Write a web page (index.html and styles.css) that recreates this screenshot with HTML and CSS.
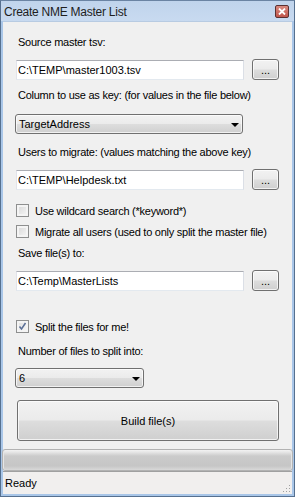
FILE: index.html
```html
<!DOCTYPE html>
<html lang="en">
<head>
  <meta charset="UTF-8" />
  <title>Create NME Master List</title>
  <link rel="stylesheet" href="styles.css">
</head>
<body>
  <div class="window">
    <div class="titlebar">
      <span class="title">Create NME Master List</span>
      <span class="close-btn" aria-label="Close">
        <svg width="8" height="7" viewBox="0 0 8 7"><path d="M1 0.5 L7 6.5 M7 0.5 L1 6.5" stroke="#fff" stroke-width="1.8"/></svg>
      </span>
    </div>

    <div class="client">
      <div class="form">
        <div class="lbl first">Source master tsv:</div>
        <div class="field-row">
          <input class="textbox" type="text" value="C:\TEMP\master1003.tsv">
          <button class="btn browse">...</button>
        </div>

        <div class="lbl gap9">Column to use as key: (for values in the file below)</div>
        <div class="combo wide">
          <span>TargetAddress</span>
          <span class="arrow"></span>
        </div>

        <div class="lbl gap12">Users to migrate: (values matching the above key)</div>
        <div class="field-row">
          <input class="textbox" type="text" value="C:\TEMP\Helpdesk.txt">
          <button class="btn browse">...</button>
        </div>

        <label class="check first-check">
          <span class="box"></span>
          <span>Use wildcard search (*keyword*)</span>
        </label>
        <label class="check">
          <span class="box"></span>
          <span>Migrate all users (used to only split the master file)</span>
        </label>

        <div class="lbl gap9">Save file(s) to:</div>
        <div class="field-row">
          <input class="textbox" type="text" value="C:\Temp\MasterLists">
          <button class="btn browse">...</button>
        </div>

        <label class="check split-check">
          <span class="box checked">
            <svg width="9" height="9" viewBox="0 0 9 9"><path d="M1.5 4.5 L3.5 7 L7.5 1" fill="none" stroke="#5a6f96" stroke-width="1.5"/></svg>
          </span>
          <span>Split the files for me!</span>
        </label>

        <div class="lbl gap12">Number of files to split into:</div>
        <div class="combo narrow">
          <span>6</span>
          <span class="arrow"></span>
        </div>

        <button class="btn build">Build file(s)</button>
      </div>

      <div class="progress"></div>

      <div class="statusbar">
        <span>Ready</span>
        <svg class="grip" width="10" height="10" viewBox="0 0 10 10">
          <rect x="8" y="2" width="1" height="1" fill="#a0a0a0"/>
          <rect x="5" y="5" width="1" height="1" fill="#a0a0a0"/>
          <rect x="8" y="5" width="1" height="1" fill="#a0a0a0"/>
          <rect x="2" y="8" width="1" height="1" fill="#a0a0a0"/>
          <rect x="5" y="8" width="1" height="1" fill="#a0a0a0"/>
          <rect x="8" y="8" width="1" height="1" fill="#a0a0a0"/>
        </svg>
      </div>
    </div>
  </div>
</body>
</html>
```

FILE: styles.css
```css
html, body {
  margin: 0; padding: 0;
}
body {
  font-family: "Liberation Sans", Arial, sans-serif;
  font-size: 11px;
  color: #000;
  background: #a9c6e8;
}
.window {
  width: 295px;
  height: 497px;
  box-sizing: border-box;
  border: 1px solid #56708f;
  border-top-color: #6b84a3;
  background: #a9c6e8;
  padding: 0 2px 2px 2px;
  display: flex;
  flex-direction: column;
}
.titlebar {
  height: 20px;
  display: flex;
  align-items: center;
  justify-content: space-between;
  background: linear-gradient(#c0d4ec, #c8daf0);
  margin: 0 -2px;
  padding: 0 5px 0 3px;
}
.title {
  font-size: 12px;
  letter-spacing: -0.25px;
  color: #1e1e1e;
  padding-top: 1px;
}
.close-btn {
  width: 12px;
  height: 11px;
  border: 1px solid #5b3030;
  border-radius: 2px;
  background: linear-gradient(#d98a80, #c0554b);
  display: flex;
  align-items: center;
  justify-content: center;
  margin-top: 1px;
}
.client {
  flex: 1;
  background: #f0f0f0;
  display: flex;
  flex-direction: column;
  border-top: 1px solid #b8cbe2;
}
.form {
  flex: 1;
}
.lbl {
  height: 13px;
  line-height: 13px;
  margin-left: 15px;
  white-space: nowrap;
  letter-spacing: -0.25px;
}
.lbl.first { margin-top: 14px; }
.gap9 { margin-top: 9px; }
.gap12 { margin-top: 12px; }

.field-row {
  display: flex;
  align-items: flex-start;
  margin-top: 10px;
  margin-left: 13px;
  gap: 8px;
  height: 21px;
}
.textbox {
  width: 228px;
  height: 20px;
  margin: 1px 0 0 0;
  box-sizing: border-box;
  border: 1px solid #abadb3;
  border-left-color: #e2e3ea;
  border-right-color: #dbdfe6;
  border-bottom-color: #e3e9ef;
  background: #fff;
  font-family: "Liberation Sans", Arial, sans-serif;
  font-size: 11px;
  padding: 0 1px;
  color: #000;
  outline: none;
}
.btn {
  box-sizing: border-box;
  border: 1px solid #707070;
  border-radius: 3px;
  background: linear-gradient(#f2f2f2 0%, #ebebeb 48%, #dddddd 52%, #cfcfcf 100%);
  box-shadow: inset 0 0 0 1px rgba(255,255,255,0.7);
  font-family: "Liberation Sans", Arial, sans-serif;
  font-size: 11px;
  color: #000;
  padding: 0;
}
.browse {
  width: 27px;
  height: 21px;
  line-height: 14px;
}
.combo {
  box-sizing: border-box;
  height: 20px;
  margin-left: 12px;
  border: 1px solid #707070;
  border-radius: 3px;
  background: linear-gradient(#f2f2f2 0%, #ebebeb 48%, #dddddd 52%, #cfcfcf 100%);
  box-shadow: inset 0 0 0 1px rgba(255,255,255,0.7);
  display: flex;
  align-items: center;
  justify-content: space-between;
  padding: 0 3px 0 3px;
}
.combo.wide {
  width: 228px;
  margin-top: 12px;
}
.combo.narrow {
  width: 129px;
  margin-top: 10px;
}
.arrow {
  width: 0;
  height: 0;
  border-left: 4px solid transparent;
  border-right: 4px solid transparent;
  border-top: 4px solid #000;
  margin-top: 1px;
}
.check {
  display: flex;
  align-items: center;
  gap: 6px;
  height: 13px;
  margin-left: 13px;
  margin-top: 8px;
  white-space: nowrap;
  letter-spacing: -0.25px;
}
.check.first-check { margin-top: 14px; }
.check.split-check { margin-top: 29px; }
.box {
  width: 13px;
  height: 13px;
  box-sizing: border-box;
  border: 1px solid #8e8f8f;
  background: linear-gradient(135deg, #d6d6d6, #f8f8f8);
  box-shadow: inset 0 0 0 2px #f4f4f4;
  display: flex;
  align-items: center;
  justify-content: center;
}
.box.checked {
  background: linear-gradient(135deg, #dcdcdc, #fafafa);
}
.build {
  display: block;
  width: 262px;
  height: 41px;
  margin: 12px 0 0 14px;
  font-size: 11px;
}
.progress {
  height: 22px;
  box-sizing: border-box;
  margin: 0 -1px 0 -1px;
  border: 1px solid #b2b2b2;
  border-radius: 3px;
  background: linear-gradient(#f3f3f3 0%, #e4e4e4 12%, #cbcbcb 30%, #c6c6c6 80%, #d8d8d8 100%);
  box-shadow: inset 1px 0 0 #e6e6e6, inset -1px 0 0 #e6e6e6;
}
.statusbar {
  height: 22px;
  border-top: 1px solid #a0a0a0;
  background: #f1efee;
  display: flex;
  align-items: center;
  justify-content: space-between;
  padding: 0 1px 0 2px;
}
.grip {
  align-self: flex-end;
  margin-bottom: 1px;
}
```
